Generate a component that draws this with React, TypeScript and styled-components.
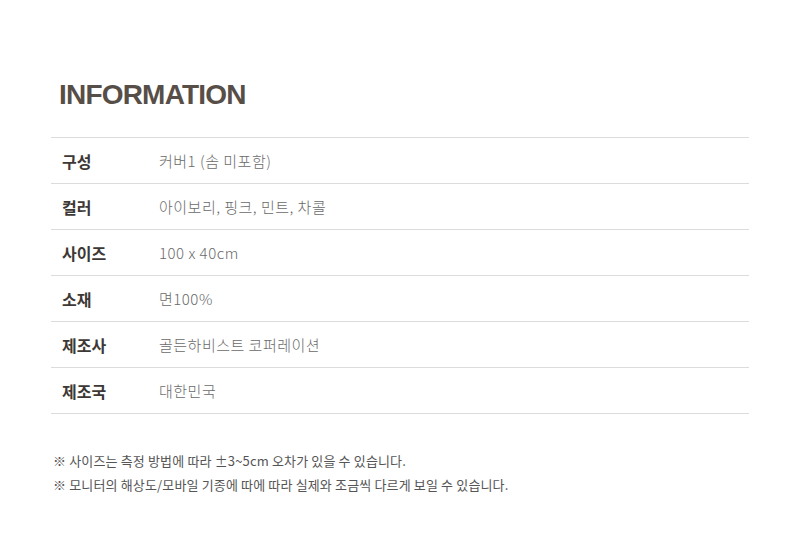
import React from "react";
import styled, { createGlobalStyle } from "styled-components";

const GlobalStyle = createGlobalStyle`
  body {
    margin: 0;
    background: #ffffff;
    font-family: "Noto Sans CJK KR", "Noto Sans", sans-serif;
  }
`;

const rows: { label: string; value: string }[] = [
  { label: "구성", value: "커버1 (솜 미포함)" },
  { label: "컬러", value: "아이보리, 핑크, 민트, 차콜" },
  { label: "사이즈", value: "100 x 40cm" },
  { label: "소재", value: "면100%" },
  { label: "제조사", value: "골든하비스트 코퍼레이션" },
  { label: "제조국", value: "대한민국" },
];

const notes = [
  "※ 사이즈는 측정 방법에 따라 ±3~5cm 오차가 있을 수 있습니다.",
  "※ 모니터의 해상도/모바일 기종에 따에 따라 실제와 조금씩 다르게 보일 수 있습니다.",
];

const App: React.FC = () => (
  <>
    <GlobalStyle />
    <Page>
      <Title>INFORMATION</Title>
      <Table>
        {rows.map((row) => (
          <Row key={row.label}>
            <Label>{row.label}</Label>
            <Value>{row.value}</Value>
          </Row>
        ))}
      </Table>
      <Notes>
        {notes.map((n) => (
          <Note key={n}>{n}</Note>
        ))}
      </Notes>
    </Page>
  </>
);

const Page = styled.section`
  width: 800px;
  height: 558px;
  box-sizing: border-box;
  padding: 79px 51px 0 51px;
`;

const Title = styled.h2`
  margin: 0 0 0 8px;
  font-family: "Liberation Sans", Arial, sans-serif;
  font-weight: 700;
  font-size: 28px;
  line-height: 32px;
  letter-spacing: -0.8px;
  color: #574e48;
`;

const Table = styled.div`
  margin-top: 26px;
  border-top: 1px solid #dcdcdc;
`;

const Row = styled.div`
  display: grid;
  grid-template-columns: 108px 1fr;
  align-items: center;
  height: 45px;
  border-bottom: 1px solid #dcdcdc;
`;

const Label = styled.span`
  padding-left: 11px;
  font-size: 16px;
  font-weight: 700;
  color: #3d3835;
  letter-spacing: 0;
`;

const Value = styled.span`
  font-size: 15px;
  font-weight: 300;
  color: #6a6a6a;
  letter-spacing: 0.5px;
`;

const Notes = styled.div`
  margin-top: 37px;
  padding-left: 2px;
  display: flex;
  flex-direction: column;
  gap: 4px;
`;

const Note = styled.p`
  margin: 0;
  font-size: 13px;
  line-height: 20px;
  color: #555555;
  letter-spacing: 0.15px;
`;

export default App;
